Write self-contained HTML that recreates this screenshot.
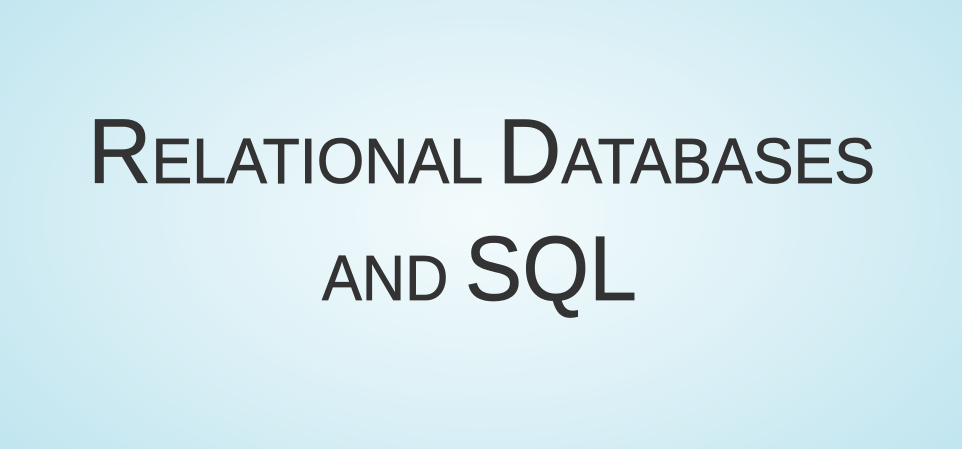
<!DOCTYPE html>
<html><head><meta charset="utf-8"><style>
html,body{margin:0;padding:0}
body{width:962px;height:449px;overflow:hidden;position:relative;
background:radial-gradient(ellipse 620px 380px at 481px 215px,#f4fbfc 0%,#dff2f7 45%,#c0e5ef 100%);
font-family:"Liberation Sans",sans-serif;color:#333;}
.l{position:absolute;left:0;white-space:nowrap;line-height:1;transform-origin:0 0;-webkit-text-stroke:0.8px #333}
.b{font-size:92px}.s{font-size:64px}
</style></head><body>
<div class="l" id="l1" data-x="88" data-w="787" data-base="189"><span class="b">R</span><span class="s">ELATIONAL </span><span class="b">D</span><span class="s">ATABASES</span></div>
<div class="l" id="l2" data-x="322" data-w="315" data-base="306"><span class="s">AND </span><span class="b">SQL</span></div>
<script>
['l1','l2'].forEach(function(id){
 var e=document.getElementById(id);
 var w=e.getBoundingClientRect().width;
 var sx=(+e.dataset.w)/w;
 var top=(+e.dataset.base)-0.905*92;
 e.style.top=top+'px';
 e.style.left=e.dataset.x+'px';
 e.style.transform='scaleX('+sx+')';
});
</script>
</body></html>
